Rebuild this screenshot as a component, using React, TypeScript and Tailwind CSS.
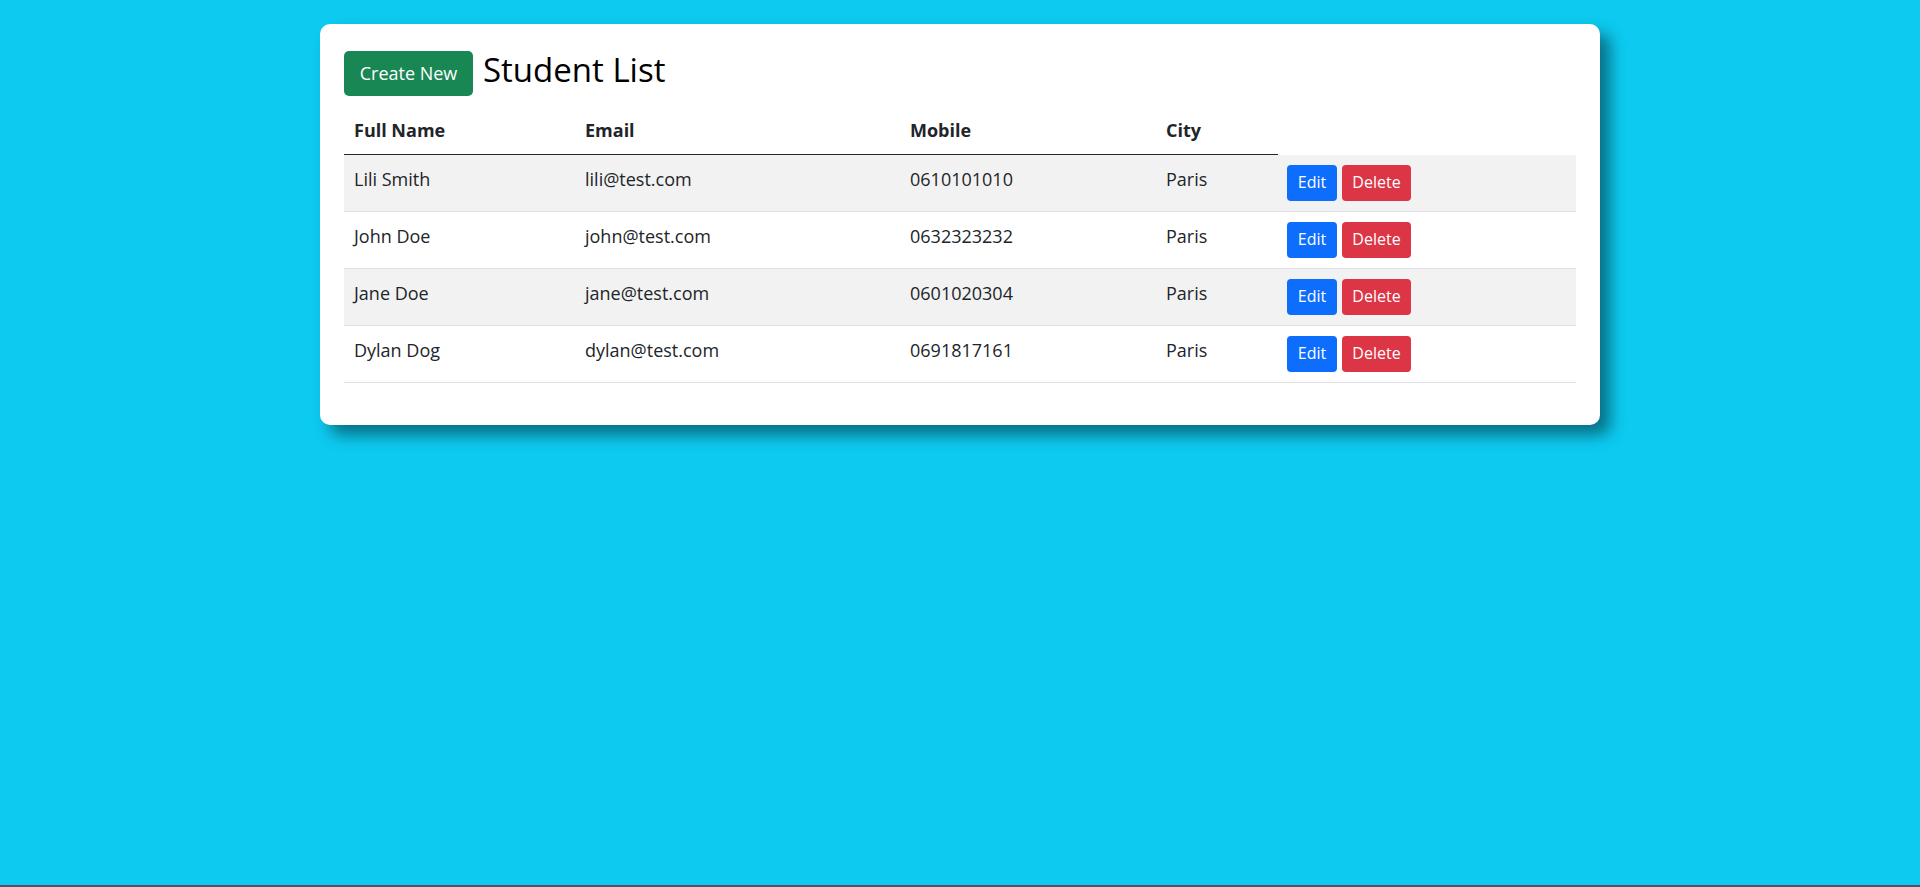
const students = [
  { name: "Lili Smith", email: "lili@test.com", mobile: "0610101010", city: "Paris" },
  { name: "John Doe", email: "john@test.com", mobile: "0632323232", city: "Paris" },
  { name: "Jane Doe", email: "jane@test.com", mobile: "0601020304", city: "Paris" },
  { name: "Dylan Dog", email: "dylan@test.com", mobile: "0691817161", city: "Paris" },
];

const StudentList = () => {
  return (
    <div className="w-[1280px] mx-auto mt-6 bg-white rounded-[10px] px-6 pt-[27px] pb-[42px] shadow-[10px_10px_16px_rgba(0,0,0,0.45)]">
      {/* heading */}
      <div className="flex items-start gap-[10px] mb-[11px]">
        <button className="h-[45px] w-[129px] rounded-[5px] bg-[#198754] text-white text-[18px] leading-[27px]">
          Create New
        </button>
        <h2 className="-mt-[1px] text-[33px] leading-[40px] font-medium text-black">Student List</h2>
      </div>

      <table className="w-full border-collapse text-[18px] leading-[27px] text-[#212529]">
        <thead>
          <tr>
            <th className="w-[231px] text-left font-bold px-[10px] py-[10px] border-b border-[#212529]">Full Name</th>
            <th className="w-[325px] text-left font-bold px-[10px] py-[10px] border-b border-[#212529]">Email</th>
            <th className="w-[256px] text-left font-bold px-[10px] py-[10px] border-b border-[#212529]">Mobile</th>
            <th className="w-[122px] text-left font-bold px-[10px] py-[10px] border-b border-[#212529]">City</th>
            <th className="w-[298px]"></th>
          </tr>
        </thead>
        <tbody>
          {students.map((s, i) => (
            <tr key={s.email} className={`border-b border-[#dee2e6] ${i % 2 === 0 ? "bg-[#f2f2f2]" : "bg-white"}`}>
              <td className="align-top px-[10px] pt-[11px] pb-[9px]">{s.name}</td>
              <td className="align-top px-[10px] pt-[11px] pb-[9px]">{s.email}</td>
              <td className="align-top px-[10px] pt-[11px] pb-[9px]">{s.mobile}</td>
              <td className="align-top px-[10px] pt-[11px] pb-[9px]">{s.city}</td>
              <td className="align-top pl-[9px] pt-[10px] pb-[10px]">
                <div className="flex gap-[5px]">
                  <button className="h-[36px] w-[50px] rounded-[4px] bg-[#0d6efd] text-white text-[16px]">Edit</button>
                  <button className="h-[36px] w-[69px] rounded-[4px] bg-[#dc3545] text-white text-[16px]">Delete</button>
                </div>
              </td>
            </tr>
          ))}
        </tbody>
      </table>
    </div>
  );
};

export default function App() {
  return (
    <div
      className="h-[887px] bg-[#0dcaf0] border-b-2 border-[#584b6b] overflow-hidden"
      style={{ fontFamily: '"Open Sans", "Noto Sans", sans-serif' }}
    >
      <StudentList />
    </div>
  );
}
